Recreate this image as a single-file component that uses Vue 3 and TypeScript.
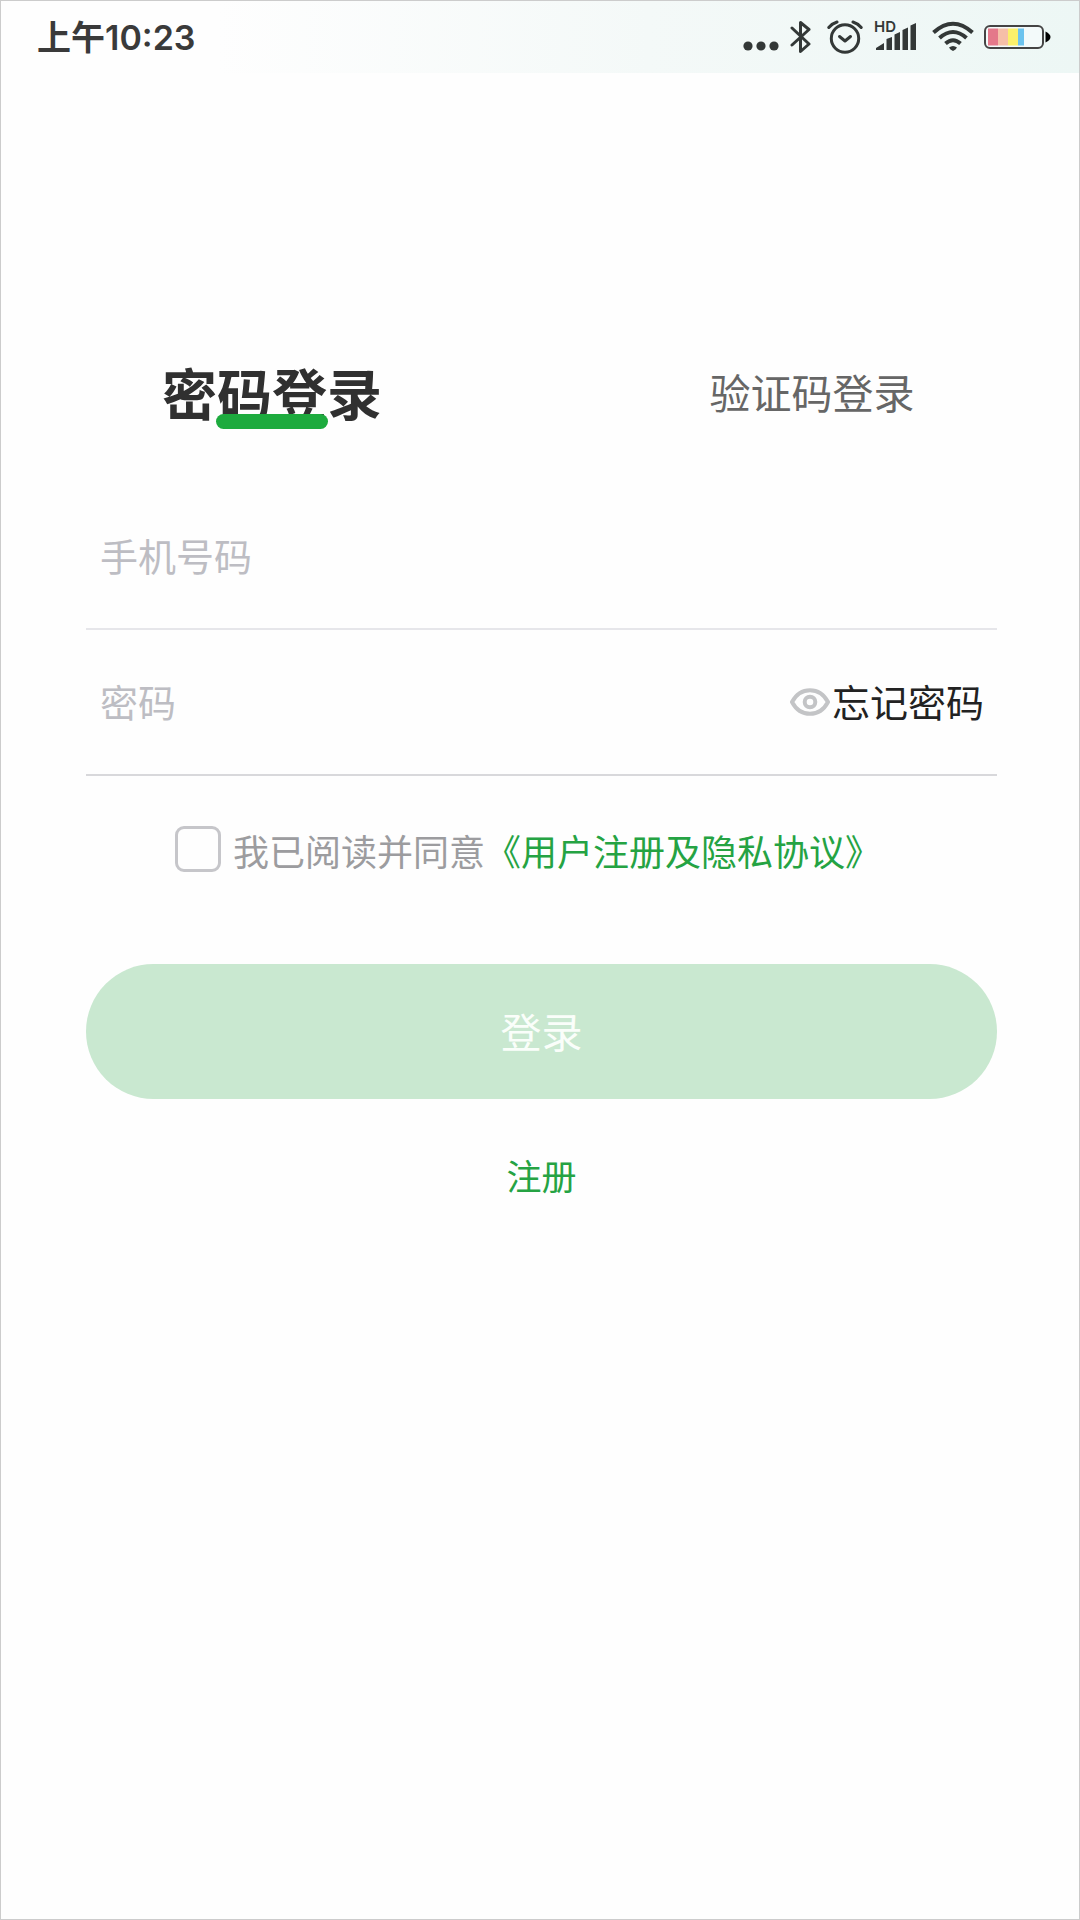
<script setup lang="ts">
import { computed, ref } from 'vue'

type Mode = 'password' | 'code'

const mode = ref<Mode>('password')
const phone = ref('')
const password = ref('')
const visible = ref(false)
const agreed = ref(false)

const ready = computed(() => phone.value !== '' && password.value !== '' && agreed.value)

const batteryCells = [
  { x: 4, width: 10, color: '#e4788a' },
  { x: 14, width: 10, color: '#f6bfa8' },
  { x: 24, width: 10, color: '#fbf06a' },
  { x: 34, width: 6, color: '#6cc3ee' },
]
</script>

<template>
  <div class="screen">
    <header class="status">
      <div class="time">上午<span class="digits">10:23</span></div>
      <div class="icons">
        <svg class="dots" width="36" height="36" viewBox="0 0 36 36" aria-hidden="true">
          <circle cx="5" cy="28" r="4.6" />
          <circle cx="18" cy="28" r="4.6" />
          <circle cx="31" cy="28" r="4.6" />
        </svg>
        <svg class="bluetooth line" width="22" height="36" viewBox="0 0 22 36" aria-hidden="true">
          <path d="M2 10 L19 26 L10.500 33.500 V4.500 L19 11.500 L2 27" />
        </svg>
        <svg class="alarm line" width="36" height="36" viewBox="0 0 36 36" aria-hidden="true">
          <circle cx="18" cy="20.500" r="13.700" />
          <path d="M12.500 18.500 L18 23 L23.500 18.500" />
          <path d="M1.800 9.500 Q5 5.500 10 4 M26 4 Q31 5.500 34.200 9.500" />
        </svg>
        <svg class="signal" width="44" height="36" viewBox="0 0 44 36" aria-hidden="true">
          <text x="0" y="14">HD</text>
          <path d="M2 32 V30 L10 25 V32 Z M12.500 32 V21 L18 19 V32 Z M20.500 32 V16.500 L26 14 V32 Z M28.500 32 V12 L34 9.500 V32 Z M36.500 32 V7.500 L42 5 V32 Z" />
        </svg>
        <svg class="wifi" width="42" height="36" viewBox="0 0 42 36" aria-hidden="true">
          <path class="arc" d="M1.500 14.500 Q21 -3 40.500 14.500" />
          <path class="arc" d="M7.500 20 Q21 8 34.500 20" />
          <path class="arc" d="M13.500 25.500 Q21 19 28.500 25.500" />
          <path d="M17 29.500 Q21 26.500 25 29.500 Q24 31.500 21 33 Q18 31.500 17 29.500 Z" />
        </svg>
        <svg class="battery" width="68" height="36" viewBox="0 0 68 36" aria-hidden="true">
          <rect class="shell" x="1" y="8" width="58" height="22" rx="5" />
          <rect v-for="c in batteryCells" :key="c.x" :x="c.x" y="10.500" :width="c.width" height="17" :fill="c.color" />
          <path d="M61.500 13.500 Q66.500 16 66.500 19 Q66.500 22 61.500 24.500 Z" fill="#000" />
        </svg>
      </div>
    </header>

    <nav class="tabs">
      <button type="button" class="tab" :class="{ active: mode === 'password' }" @click="mode = 'password'">密码登录</button>
      <button type="button" class="tab" :class="{ active: mode === 'code' }" @click="mode = 'code'">验证码登录</button>
    </nav>

    <form class="form" @submit.prevent>
      <div class="field">
        <input v-model="phone" type="tel" placeholder="手机号码" aria-label="手机号码" />
      </div>
      <div class="field second">
        <input v-model="password" :type="visible ? 'text' : 'password'" placeholder="密码" aria-label="密码" />
        <button type="button" class="eye" aria-label="显示密码" @click="visible = !visible">
          <svg width="40" height="28" viewBox="0 0 40 28" aria-hidden="true">
            <path d="M2 14 C6 6.500 12.500 2.200 20 2.200 C27.500 2.200 34 6.500 38 14 C34 21.500 27.500 25.800 20 25.800 C12.500 25.800 6 21.500 2 14 Z" />
            <circle cx="20" cy="14" r="5.300" />
          </svg>
        </button>
        <a class="forgot" href="#">忘记密码</a>
      </div>

      <div class="agreement">
        <input id="agree" v-model="agreed" type="checkbox" />
        <label for="agree">我已阅读并同意</label>
        <a href="#">《用户注册及隐私协议》</a>
      </div>

      <button type="submit" class="submit" :class="{ ready }">登录</button>
      <a class="register" href="#">注册</a>
    </form>
  </div>
</template>

<style>
body {
  margin: 0;
}
</style>

<style scoped>
.screen {
  box-sizing: border-box;
  min-height: 100vh;
  border: 1px solid #ccc;
  background: #fefefe;
  font-family: "Noto Sans CJK SC", sans-serif;
}

button,
input {
  margin: 0;
  padding: 0;
  border: 0;
  background: none;
  font: inherit;
}

button {
  cursor: pointer;
}

a {
  text-decoration: none;
}

.status {
  display: flex;
  align-items: center;
  justify-content: space-between;
  height: 72px;
  padding: 0 27px 0 36px;
  background: linear-gradient(90deg, #fefefe 20%, #f4f9f8 60%, #edf7f5);
}

.time {
  color: #3a3a3a;
  font-size: 34px;
  font-weight: 700;
  line-height: 48px;
}

.digits {
  font-family: Inter, sans-serif;
  font-weight: 600;
}

.icons {
  display: flex;
  align-items: center;
  margin-bottom: 2px;
  fill: #333837;
}

.line {
  fill: none;
  stroke: #333837;
  stroke-width: 3;
  stroke-linecap: round;
  stroke-linejoin: round;
}

.bluetooth {
  margin-left: 11px;
}

.alarm {
  margin-left: 15px;
}

.signal {
  margin-left: 11px;
}

.signal text {
  font-family: Inter, sans-serif;
  font-size: 15px;
  font-weight: 600;
}

.wifi {
  margin-left: 14px;
}

.arc {
  fill: none;
  stroke: #333837;
  stroke-width: 4;
}

.battery {
  margin-left: 10px;
}

.shell {
  fill: #f3fafa;
  stroke: #444;
  stroke-width: 2;
}

.tabs {
  display: grid;
  grid-template-columns: 1fr 1fr;
  column-gap: 6px;
  align-items: center;
  justify-items: center;
  margin-top: 278px;
  padding-left: 4px;
}

.tab {
  position: relative;
  color: #666;
  font-size: 41px;
  line-height: 80px;
}

.tab.active {
  color: #303030;
  font-size: 55px;
  font-weight: 700;
}

.tab.active::after {
  position: absolute;
  bottom: 2px;
  left: 50%;
  width: 112px;
  height: 15px;
  margin-left: -56px;
  border-radius: 8px;
  background: #1dab3e;
  content: "";
}

.form {
  display: flex;
  flex-direction: column;
  margin: 53px 82px 0 85px;
}

.field {
  display: flex;
  align-items: center;
  box-sizing: border-box;
  height: 146px;
  padding: 0 13px 3px 14px;
  border-bottom: 2px solid #e6e6ea;
  font-size: 38px;
}

.field.second {
  border-bottom-color: #d8d8db;
}

.field input {
  flex: 1;
  min-width: 0;
  height: 60px;
  outline: 0;
  color: #222;
}

.field input::placeholder {
  color: #bdbdc3;
  opacity: 1;
}

.eye {
  display: flex;
  margin: 2px 2px 0 0;
}

.eye svg {
  fill: none;
  stroke: #c3c4c6;
  stroke-width: 4;
}

.forgot {
  color: #222;
}

.agreement {
  display: flex;
  align-items: center;
  height: 54px;
  margin: 47px 0 0 89px;
  font-size: 36px;
  line-height: 54px;
  white-space: nowrap;
}

.agreement input {
  box-sizing: border-box;
  width: 46px;
  height: 46px;
  margin: 0 12px 2px 0;
  border: 3px solid #c6c6ca;
  border-radius: 9px;
  appearance: none;
}

.agreement input:checked {
  background: #1dab3e;
}

.agreement label {
  color: #9c9c9f;
}

.agreement a,
.register {
  color: #25a343;
}

.submit {
  box-sizing: border-box;
  height: 135px;
  margin-top: 87px;
  padding-bottom: 4px;
  border-radius: 68px;
  background: #c9e8d0;
  color: #fafefa;
  font-size: 41px;
}

.submit.ready {
  background: #1dab3e;
}

.register {
  align-self: center;
  margin-top: 50px;
  font-size: 35px;
  line-height: 52px;
}
</style>
